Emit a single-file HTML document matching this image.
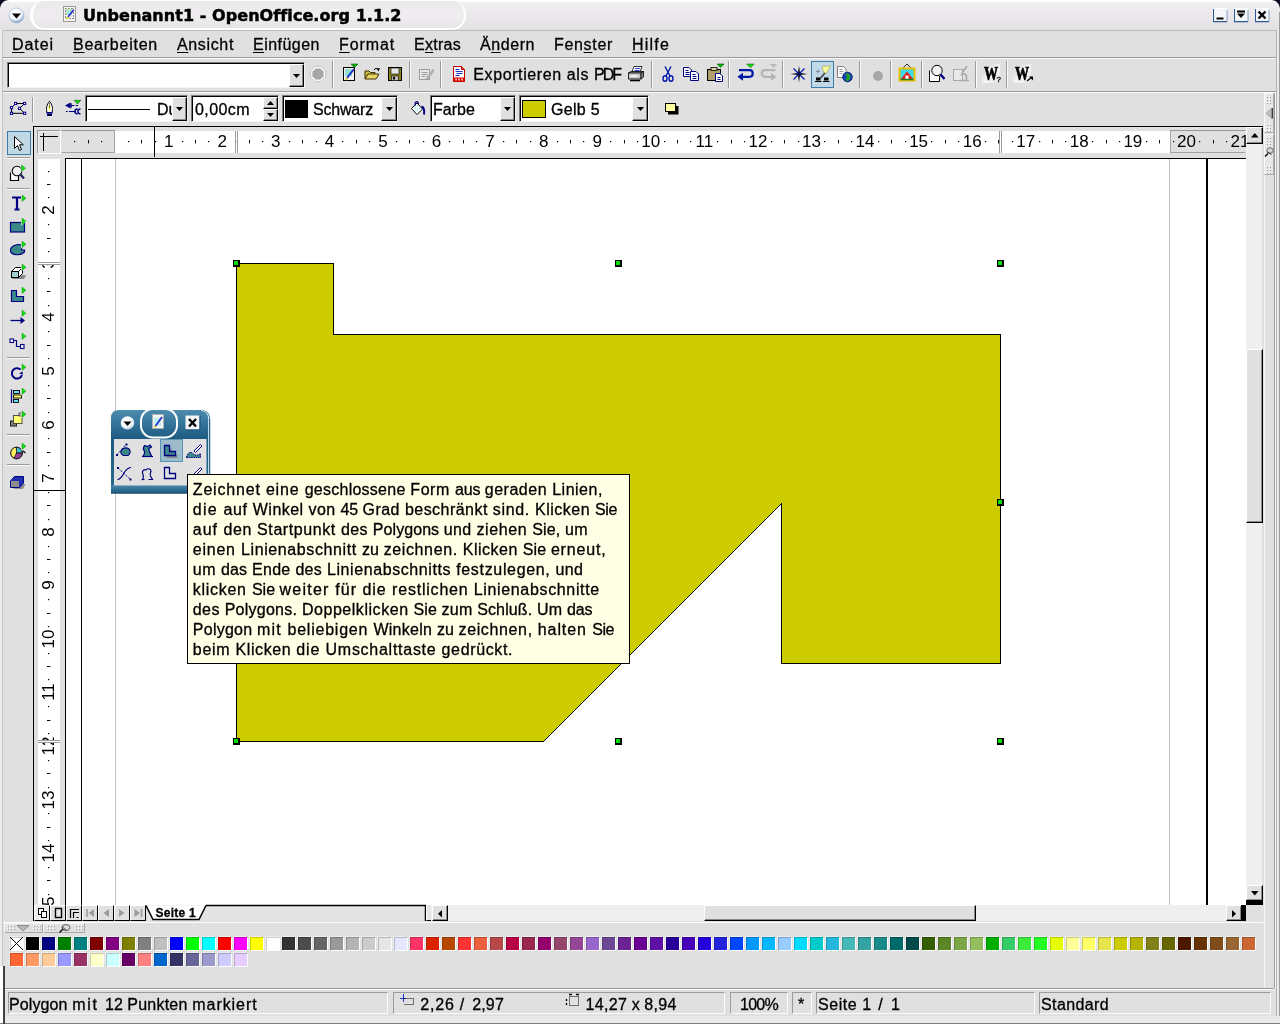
<!DOCTYPE html><html lang="de"><head><meta charset="utf-8"><title>Unbenannt1 - OpenOffice.org 1.1.2</title><style>
html,body{margin:0;padding:0}
body{width:1280px;height:1024px;overflow:hidden;background:#e0e0e0;position:relative;font-family:"Liberation Sans",sans-serif;color:#000}
div,span.t,svg{position:absolute}
span.t{white-space:pre;line-height:20px;-webkit-text-stroke:.3px #000}
span.rn{-webkit-text-stroke:0}
.ln{background:#000}
.sunk{box-sizing:border-box;background:#fff;border:1px solid;border-color:#7b7b7b #f4f4f4 #f4f4f4 #7b7b7b;box-shadow:inset 1px 1px 0 #000}
.btn{box-sizing:border-box;background:#e0e0e0;border:1px solid;border-color:#fff #000 #000 #fff;box-shadow:inset -1px -1px 0 #8a8a8a}
.sep{width:1px;background:#9a9a9a;box-shadow:1px 0 0 #fbfbfb}
.hsep{height:1px;background:#9a9a9a;box-shadow:0 1px 0 #fbfbfb}
u{text-decoration:underline;text-decoration-thickness:1px;text-underline-offset:2px;text-decoration-skip-ink:none}
</style></head><body><div id="w" style="left:0;top:0;width:1280px;height:1024px;will-change:transform">
<div style="left:0px;top:0px;width:1280px;height:30px;background:linear-gradient(#fff 0,#fff 2px,#f2eff2 2.5px,#e3e0e3 30px)"></div>
<svg style="left:0;top:0" width="12" height="12"><path d="M0 0H9C3.500 0.500 0.500 3.500 0 9Z" fill="#0c0a24"/></svg>
<svg style="left:1268px;top:0" width="12" height="12"><path d="M12 0H3C8.500 0.500 11.500 3.500 12 9Z" fill="#0c0a24"/></svg>
<div style="left:30px;top:1px;width:436px;height:29px;box-sizing:border-box;border-radius:14px;background:linear-gradient(#ebe8eb,#f0edf0 55%,#e8e5e8);border:solid #fff;border-width:0 2px 2.500px 3px"></div>
<svg style="left:7px;top:6px" width="19" height="19" viewBox="0 0 19 19"><defs><radialGradient id="g1" cx="0.45" cy="0.35" r="0.7"><stop offset="0" stop-color="#fff"/><stop offset="0.6" stop-color="#eef2f8"/><stop offset="1" stop-color="#3f74b4"/></radialGradient></defs><circle cx="9.5" cy="9.5" r="7.6" fill="url(#g1)" stroke="#b4c8e0" stroke-width="0.8"/><path d="M5 7.5H14L9.5 12.5Z" fill="#000"/></svg>
<svg style="left:63px;top:6px" width="14" height="16" viewBox="0 0 14 16"><rect x="0.5" y="0.5" width="12" height="15" fill="#f4f4f4" stroke="#9a9a9a"/><rect x="2.500" y="2.500" width="8" height="10" fill="none" stroke="#202020" stroke-width="1" stroke-dasharray="1 2"/><rect x="3" y="3" width="6" height="6" fill="#9fe8f0"/><path d="M3 3h1M6 3h1M4 5h1M7 5h1M3 7h1" stroke="#f4e040"/><path d="M10.5 4L5 11" stroke="#3a3ac8" stroke-width="2"/><path d="M5 11L3.8 12.6" stroke="#e8d820" stroke-width="2"/></svg>
<span class="t" style="left:83px;top:6.46px;font-size:16px;font-family:'DejaVu Sans', 'Liberation Sans', sans-serif;font-weight:bold;letter-spacing:0.065px;-webkit-text-stroke:.5px #000;">Unbenannt1 - OpenOffice.org 1.1.2</span>
<svg style="left:1213px;top:8px" width="15" height="15" viewBox="0 0 15 15"><rect x="0.5" y="0.5" width="13" height="13" fill="#f4f6fa" stroke="#fff"/><path d="M0.400 1V13.600H14" fill="none" stroke="#2d5a94" stroke-width="1.300"/><path d="M14 13.600V2" fill="none" stroke="#7f9cc4" stroke-width="1"/><path d="M3.5 10.5H10.5" stroke="#000" stroke-width="2"/></svg>
<svg style="left:1234px;top:8px" width="15" height="15" viewBox="0 0 15 15"><rect x="0.5" y="0.5" width="13" height="13" fill="#f4f6fa" stroke="#fff"/><path d="M0.400 1V13.600H14" fill="none" stroke="#2d5a94" stroke-width="1.300"/><path d="M14 13.600V2" fill="none" stroke="#7f9cc4" stroke-width="1"/><path d="M3 3.5H11" stroke="#000" stroke-width="2"/><path d="M3 5.5H11L7 10Z" fill="#000"/></svg>
<svg style="left:1255px;top:8px" width="15" height="15" viewBox="0 0 15 15"><rect x="0.5" y="0.5" width="13" height="13" fill="#f4f6fa" stroke="#fff"/><path d="M0.400 1V13.600H14" fill="none" stroke="#2d5a94" stroke-width="1.300"/><path d="M14 13.600V2" fill="none" stroke="#7f9cc4" stroke-width="1"/><path d="M3.5 3.5L10.5 10.5M10.5 3.5L3.5 10.5" stroke="#000" stroke-width="2.4"/></svg>
<div style="left:3px;top:30px;width:1273px;height:1px;background:#bcbabc"></div>
<span class="t" style="left:12px;top:35.46px;font-size:16px;letter-spacing:0.928px;"><u>D</u>atei</span>
<span class="t" style="left:73px;top:35.46px;font-size:16px;letter-spacing:0.761px;"><u>B</u>earbeiten</span>
<span class="t" style="left:177px;top:35.46px;font-size:16px;letter-spacing:0.647px;"><u>A</u>nsicht</span>
<span class="t" style="left:253px;top:35.46px;font-size:16px;letter-spacing:0.479px;"><u>E</u>infügen</span>
<span class="t" style="left:339px;top:35.46px;font-size:16px;letter-spacing:0.888px;"><u>F</u>ormat</span>
<span class="t" style="left:414px;top:35.46px;font-size:16px;letter-spacing:0.276px;">E<u>x</u>tras</span>
<span class="t" style="left:480px;top:35.46px;font-size:16px;letter-spacing:0.568px;">Ä<u>n</u>dern</span>
<span class="t" style="left:554px;top:35.46px;font-size:16px;letter-spacing:0.679px;">Fen<u>s</u>ter</span>
<span class="t" style="left:632px;top:35.46px;font-size:16px;letter-spacing:1.197px;"><u>H</u>ilfe</span>
<div class="hsep" style="left:3px;top:57px;width:1273px;height:1px;"></div>
<div class="hsep" style="left:3px;top:91px;width:1273px;height:1px;"></div>
<div style="left:0px;top:30px;width:2px;height:994px;background:#ecebec"></div>
<div style="left:2px;top:30px;width:1px;height:994px;background:#c4c4c4"></div>
<div class="sunk" style="left:7px;top:62px;width:298px;height:26px;"></div>
<div class="btn" style="left:289px;top:64px;width:15px;height:23px;"><svg style="left:3px;top:8.5px" width="7" height="4"><path d="M0 0H7L3.500 4Z" fill="#000"/></svg></div>
<svg style="left:308.5px;top:65px" width="18" height="18" viewBox="0 0 18 18"><path d="M16.67 12.18L12.18 16.67L5.82 16.67L1.33 12.18L1.33 5.82L5.82 1.33L12.18 1.33L16.67 5.82Z" fill="#f6f6f6" stroke="#c4c4c4" stroke-width="1"/><path d="M14.54 11.30L11.30 14.54L6.70 14.54L3.46 11.30L3.46 6.70L6.70 3.46L11.30 3.46L14.54 6.70Z" fill="#a6a6a6"/></svg>
<div class="sep" style="left:332px;top:61px;width:1px;height:27px;"></div>
<div class="sep" style="left:409px;top:61px;width:1px;height:27px;"></div>
<div class="sep" style="left:440px;top:61px;width:1px;height:27px;"></div>
<div class="sep" style="left:651px;top:61px;width:1px;height:27px;"></div>
<div class="sep" style="left:728px;top:61px;width:1px;height:27px;"></div>
<div class="sep" style="left:782px;top:61px;width:1px;height:27px;"></div>
<div class="sep" style="left:859px;top:61px;width:1px;height:27px;"></div>
<div class="sep" style="left:890px;top:61px;width:1px;height:27px;"></div>
<div class="sep" style="left:921px;top:61px;width:1px;height:27px;"></div>
<div class="sep" style="left:975px;top:61px;width:1px;height:27px;"></div>
<div class="sep" style="left:1006px;top:61px;width:1px;height:27px;"></div>
<svg style="left:341px;top:63px" width="18" height="20" viewBox="0 0 18 20"><rect x="2.5" y="4.5" width="11" height="13" fill="#f0f0f0" stroke="#000"/><rect x="4" y="6" width="7" height="7" fill="#7fe0e8"/><path d="M4 7h1M7 8h1M5 10h1M8 6h1" stroke="#f0e040"/><path d="M13 6L6 15" stroke="#2828c0" stroke-width="2"/><path d="M6 15L5 17" stroke="#e0d020" stroke-width="2"/><path d="M10 1H17L13.5 4.5Z" fill="#00b000" stroke="#006000" stroke-width="0.6"/></svg>
<svg style="left:363px;top:66px" width="18" height="16" viewBox="0 0 18 16"><path d="M2 13V5H6L7.5 6.5H12V8" fill="#c8b848" stroke="#403000"/><path d="M2 13L5 8H16L13 13Z" fill="#e8d868" stroke="#403000"/><path d="M11 4C12 2 14 2 15 3.5L16.5 2.5" fill="none" stroke="#000"/><path d="M15.5 5.5L16.8 2.2L13.6 2.6Z" fill="#000"/></svg>
<svg style="left:387px;top:66px" width="16" height="16" viewBox="0 0 16 16"><rect x="1.5" y="1.5" width="13" height="13" fill="#8a8420" stroke="#000"/><rect x="4" y="2" width="8" height="6" fill="#e8e8e8" stroke="#000" stroke-width="0.6"/><rect x="4.5" y="10" width="7" height="4.5" fill="#c0c0c0" stroke="#000" stroke-width="0.6"/><rect x="6" y="11" width="2" height="2.5" fill="#000"/></svg>
<svg style="left:417px;top:66px" width="18" height="16" viewBox="0 0 18 16"><rect x="2.5" y="3.5" width="10" height="10" fill="#e8e8e8" stroke="#9c9c9c"/><path d="M4.5 6.5h6M4.5 8.5h6M4.5 10.5h4" stroke="#9c9c9c"/><path d="M16 3L10 11L9 13.5L11.5 12.5L17 5Z" fill="#b4b4b4" stroke="#9c9c9c" stroke-width="0.6"/></svg>
<svg style="left:450.5px;top:65px" width="16" height="18" viewBox="0 0 16 18"><path d="M2.5 1.5H10.5L13.5 4.5V16.5H2.5Z" fill="#fff" stroke="#c00000"/><path d="M10.5 1.5V4.5H13.5" fill="#e04040" stroke="#c00000"/><path d="M4.5 4.5h4M4.5 6.5h7M5.5 8.5h6M4.5 10.5h4" stroke="#1830c8" stroke-width="1.2"/><rect x="2.5" y="12.5" width="11" height="4" fill="#e00000"/><path d="M5 13.5v2M8 13.5v2M11 13.5v2" stroke="#fff" stroke-width="1.3"/></svg>
<span class="t" style="left:473.3px;top:65.46px;font-size:16px;letter-spacing:0.603px;">Exportieren </span><span class="t" style="left:566.8px;top:65.46px;font-size:16px;letter-spacing:0.573px;">als </span><span class="t" style="left:594.0px;top:65.46px;font-size:16px;letter-spacing:-2.033px;">PDF</span>
<svg style="left:626px;top:65px" width="20" height="18" viewBox="0 0 20 18"><path d="M6 7L8 1.5H16L14 7Z" fill="#fff" stroke="#000" stroke-width="0.8"/><path d="M9 3.5h5M8.5 5.5h5" stroke="#3040d0"/><path d="M2.500 8L5 6.500H17.500L15 8Z" fill="#d0d0d0" stroke="#000" stroke-width="0.8"/><rect x="2.500" y="8" width="12.500" height="6" fill="#c8c8c8" stroke="#000" stroke-width="0.8"/><path d="M15 8L17.500 6.500V12L15 14Z" fill="#888" stroke="#000" stroke-width="0.8"/><path d="M4 15.500H14" stroke="#000" stroke-width="1.600"/><path d="M4.500 11h7" stroke="#fff" stroke-width="1.400"/></svg>
<svg style="left:660.5px;top:65px" width="14" height="18" viewBox="0 0 14 18"><path d="M4 1.5L9 11M10 1.5L5 11" stroke="#0018a8" stroke-width="1.4" fill="none"/><ellipse cx="4" cy="13.500" rx="2" ry="2.800" fill="none" stroke="#0018a8" stroke-width="1.400"/><ellipse cx="10" cy="13.500" rx="2" ry="2.800" fill="none" stroke="#0018a8" stroke-width="1.400"/></svg>
<svg style="left:682px;top:66px" width="18" height="16" viewBox="0 0 18 16"><path d="M1.5 1.5H7L9.500 4V10.500H1.500Z" fill="#fff" stroke="#000080"/><path d="M3.500 4.500h3M3.500 6.500h4M3.500 8.500h4" stroke="#000080"/><path d="M8.500 5.500H14L16.500 8V14.500H8.500Z" fill="#fff" stroke="#000080"/><path d="M10.500 8.500h3M10.500 10.500h4M10.500 12.500h4" stroke="#000080"/></svg>
<svg style="left:704.5px;top:63px" width="20" height="20" viewBox="0 0 20 20"><rect x="2.500" y="6.500" width="13" height="11" fill="#b0a070" stroke="#000"/><rect x="6" y="4.500" width="6" height="3" fill="#d8d8a0" stroke="#000" stroke-width="0.800"/><path d="M10.500 10.500H15L17.500 13V18.500H10.500Z" fill="#fff" stroke="#000080"/><path d="M12.500 14.500h3M12.500 16.500h3" stroke="#000080"/><path d="M12 1H19L15.500 4.500Z" fill="#00b000" stroke="#006000" stroke-width="0.600"/></svg>
<svg style="left:730px;top:60px" width="60" height="28" viewBox="730 60 60 28"><path d="M739 70.200H749.500C753.800 70.200 753.800 76.800 749.500 76.800H742" fill="none" stroke="#0018a8" stroke-width="2.200"/><path d="M743 72.800L737.300 76.800L743 80.800Z" fill="#0018a8"/><path d="M746.700 64H754.200L750.450 67.800Z" fill="#10d810" stroke="#085808" stroke-width="0.500"/><path d="M775.500 70.200H765C760.700 70.200 760.700 76.800 765 76.800H772" fill="none" stroke="#b4b4b4" stroke-width="2.200"/><path d="M771 72.800L776.700 76.800L771 80.800Z" fill="#b4b4b4"/><path d="M769.700 64H777.200L773.450 67.800Z" fill="#b8b8b8"/></svg>
<svg style="left:789.5px;top:65px" width="18" height="18" viewBox="0 0 18 18"><path d="M9 0.500L10 8L17.500 9L10 10L9 17.500L8 10L0.500 9L8 8Z" fill="#000"/><path d="M3.500 3.500L8.500 8.500M14.500 3.500L9.500 8.500M3.500 14.500L8.500 9.500M14.500 14.500L9.500 9.500" stroke="#0018a8" stroke-width="1.200"/></svg>
<div style="left:811px;top:61px;width:23px;height:27px;box-sizing:border-box;background:#c0d8e8;border:1px solid #3c7ca8"></div>
<svg style="left:813.5px;top:65px" width="18" height="18" viewBox="0 0 18 18"><path d="M8 1.500L16.500 1L12.500 8L10 8.500Z" fill="#f8f8a0" stroke="#a0a040" stroke-width="0.600"/><path d="M11 8L6.500 13" stroke="#404040" stroke-width="1.600"/><path d="M2 6.500h4M4 4.500v4" stroke="#8090a0" stroke-width="1.200"/><rect x="2" y="12.500" width="4.500" height="3" fill="#000"/><rect x="10" y="12.500" width="4.500" height="3" fill="#000"/><path d="M1 16.500h6.500M9 16.500h6.500" stroke="#000"/></svg>
<svg style="left:836px;top:65px" width="18" height="18" viewBox="0 0 18 18"><path d="M1.500 1.500H7.500L10 4V12.500H1.500Z" fill="#fff" stroke="#808080"/><path d="M3.500 4.500h3M3.500 6.500h4M3.500 8.500h3" stroke="#a0a0a0"/><circle cx="11.500" cy="12" r="4.800" fill="#1840c0" stroke="#001060" stroke-width="0.800"/><path d="M9 9.500C11 10 11.500 12 10 13.500C9 14.500 10.500 16 12 16C14 14.500 15 12 14 10C12.500 8.500 10 8 9 9.500Z" fill="#20a020"/></svg>
<svg style="left:871.5px;top:69.5px" width="12" height="12" viewBox="0 0 12 12"><circle cx="6" cy="6" r="5" fill="#a8a8a8"/></svg>
<svg style="left:898px;top:63px" width="18" height="20" viewBox="0 0 18 20"><path d="M5 5L9 1L13 5" fill="none" stroke="#000" stroke-width="0.800"/><rect x="1.500" y="5.500" width="15" height="12" fill="#40d8e8" stroke="#e8c000" stroke-width="2"/><path d="M2.500 16.500L9 8.500L15.500 16.500Z" fill="#e02020"/><rect x="7.500" y="12.500" width="3" height="4" fill="#fff"/><path d="M2.500 16.500h13" stroke="#208020" stroke-width="1.500"/></svg>
<svg style="left:927px;top:64px" width="20" height="20" viewBox="0 0 20 20"><path d="M2.500 6.500V17.500H12.500V12" fill="#fff" stroke="#000"/><circle cx="10" cy="6.500" r="5.200" fill="#f4f4f4" stroke="#000"/><path d="M13.500 10.500L17.500 15" stroke="#000080" stroke-width="2.400"/></svg>
<svg style="left:951px;top:64px" width="20" height="20" viewBox="0 0 20 20"><rect x="2.500" y="5.500" width="9" height="11" fill="#e8e8e8" stroke="#a8a8a8"/><path d="M16 2L11 9M10 11.500C10 9 15.500 9 15.500 12.500V15.500M8 16.500h10" fill="none" stroke="#a8a8a8" stroke-width="1.600"/></svg>
<div style="left:982px;top:64px;width:18px;height:19px;background:linear-gradient(135deg,#e0e0e0 25%,#f6f6f6 60%,#e6e6e6 90%)"></div>
<div style="left:1013px;top:64px;width:18px;height:19px;background:linear-gradient(135deg,#e0e0e0 25%,#f6f6f6 60%,#e6e6e6 90%)"></div>
<span class="t" style="left:983.5px;top:63.92px;font-size:18px;font-family:'Liberation Serif', serif;font-weight:bold;transform:scaleX(.78);transform-origin:0 0;-webkit-text-stroke:.7px #000;">W</span>
<span class="t" style="left:996.5px;top:70.23px;font-size:8px;line-height:20px;">?</span>
<span class="t" style="left:1015px;top:63.92px;font-size:18px;font-family:'Liberation Serif', serif;font-weight:bold;transform:scaleX(.78);transform-origin:0 0;-webkit-text-stroke:.7px #000;">W</span>
<svg style="left:1026px;top:75px" width="8" height="8" viewBox="0 0 8 8"><path d="M1 6L6 2" stroke="#000" stroke-width="1.200"/><path d="M3 1.500H7V5.500Z" fill="#000"/></svg>
<svg style="left:0;top:93px" width="90" height="32" viewBox="0 93 90 32"><path d="M15.600 103.500H24.600L19.500 108.400L24.600 113.300H11.500V107.600Z" fill="none" stroke="#000" stroke-width="1"/><rect x="14.5" y="102.4" width="2.200" height="2.200" fill="#fff" stroke="#000090" stroke-width="1"/><rect x="23.5" y="102.4" width="2.200" height="2.200" fill="#fff" stroke="#000090" stroke-width="1"/><rect x="10.4" y="106.5" width="2.200" height="2.200" fill="#fff" stroke="#000090" stroke-width="1"/><rect x="18.4" y="107.3" width="2.200" height="2.200" fill="#fff" stroke="#000090" stroke-width="1"/><rect x="10.4" y="112.2" width="2.200" height="2.200" fill="#fff" stroke="#000090" stroke-width="1"/><rect x="23.5" y="112.2" width="2.200" height="2.200" fill="#fff" stroke="#000090" stroke-width="1"/><path d="M49.500 101.200C46.500 105 46 108.500 47 112.500H52C53 108.500 52.500 105 49.500 101.200Z" fill="#fff" stroke="#000" stroke-width="1"/><path d="M49.500 103.500C48.300 106 48.300 109 49.500 111.500C50.700 109 50.700 106 49.500 103.500Z" fill="#f8e820"/><path d="M49.500 103V108" stroke="#404040" stroke-width="0.700"/><rect x="46.300" y="112.300" width="6.400" height="1.200" fill="#000090"/><rect x="47" y="113.500" width="5" height="2.500" fill="#000090"/><rect x="48.500" y="114" width="2" height="2" fill="#000"/><path d="M74 100.300H81L77.500 104Z" fill="#10d810" stroke="#084808" stroke-width="0.500"/><path d="M70 105.500H78" stroke="#000080" stroke-width="1.200" stroke-dasharray="4.500 1.200"/><path d="M70.500 102.500L65 105.500L70.500 108.500Z" fill="#000080"/><path d="M71 103.300V107.700" stroke="#000080" stroke-width="1.400"/><path d="M66 111.500H76" stroke="#000080" stroke-width="1.200" stroke-dasharray="1.800 1.200 8 0"/><path d="M77.500 109C74 109.500 74 113.500 77.500 114M80.500 109C77 109.500 77 113.500 80.500 114" fill="none" stroke="#000080" stroke-width="1.400"/></svg>
<div class="sep" style="left:32px;top:97px;width:1px;height:25px;"></div>
<div class="sunk" style="left:85px;top:95px;width:103px;height:27px;"></div>
<div class="ln" style="left:88px;top:109px;width:62px;height:1px;"></div>
<div style="left:155px;top:98px;width:18px;height:22px;overflow:hidden"><span class="t" style="left:2px;top:2.46px;font-size:16px;">Du</span></div>
<div class="btn" style="left:172px;top:97px;width:15px;height:24px;"><svg style="left:3px;top:9px" width="7" height="4"><path d="M0 0H7L3.500 4Z" fill="#000"/></svg></div>
<div class="sunk" style="left:191px;top:95px;width:88px;height:27px;"></div>
<span class="t" style="left:195px;top:100.46px;font-size:16px;letter-spacing:0.422px;">0,00cm</span>
<div class="btn" style="left:263px;top:97px;width:15px;height:12px;"><svg style="left:3px;top:3px" width="7" height="4"><path d="M0 4H7L3.5 0Z" fill="#000"/></svg></div>
<div class="btn" style="left:263px;top:109px;width:15px;height:12px;"><svg style="left:3px;top:3px" width="7" height="4"><path d="M0 0H7L3.5 4Z" fill="#000"/></svg></div>
<div class="sunk" style="left:282px;top:95px;width:116px;height:27px;"></div>
<div style="left:285px;top:100px;width:23px;height:18px;background:#000"></div>
<span class="t" style="left:313px;top:100.46px;font-size:16px;letter-spacing:-0.194px;">Schwarz</span>
<div class="btn" style="left:381px;top:97px;width:16px;height:24px;"><svg style="left:3.5px;top:9px" width="7" height="4"><path d="M0 0H7L3.500 4Z" fill="#000"/></svg></div>
<svg style="left:407px;top:99px" width="20" height="18" viewBox="0 0 20 18"><path d="M4.500 9.500L10 4L15.500 10L10 15.500Z" fill="#fff" stroke="#000" stroke-width="1"/><path d="M8 9h1M10 11h1M10 7h1M12 9.500h1M8.500 12h1" stroke="#30d8e8" stroke-width="1"/><path d="M8.500 6.500C7 2.500 11 1 11.500 5" fill="none" stroke="#000080" stroke-width="1.300"/><path d="M14.500 7.500C17.500 8.500 17.500 12 17 15.500" fill="none" stroke="#000080" stroke-width="2"/></svg>
<div class="sunk" style="left:430px;top:95px;width:86px;height:27px;"></div>
<span class="t" style="left:433px;top:100.46px;font-size:16px;letter-spacing:0.041px;">Farbe</span>
<div class="btn" style="left:500px;top:97px;width:15px;height:24px;"><svg style="left:3px;top:9px" width="7" height="4"><path d="M0 0H7L3.500 4Z" fill="#000"/></svg></div>
<div class="sunk" style="left:519px;top:95px;width:130px;height:27px;"></div>
<div style="left:522px;top:100px;width:24px;height:18px;box-sizing:border-box;background:#cccc00;border:1px solid #000"></div>
<span class="t" style="left:551px;top:100.46px;font-size:16px;letter-spacing:0.310px;">Gelb 5</span>
<div class="btn" style="left:632px;top:97px;width:16px;height:24px;"><svg style="left:3.5px;top:9px" width="7" height="4"><path d="M0 0H7L3.500 4Z" fill="#000"/></svg></div>
<svg style="left:665px;top:103px" width="14" height="12" viewBox="0 0 14 12"><rect x="3" y="3" width="10.500" height="8.500" fill="#000"/><rect x="0.500" y="0.500" width="10" height="8" fill="#ffffa0" stroke="#000"/></svg>
<div class="ln" style="left:33px;top:126px;width:1230px;height:1px;"></div>
<div class="ln" style="left:33px;top:126px;width:1px;height:795px;"></div>
<div style="left:65px;top:158px;width:1181px;height:747px;background:#fff"></div>
<div class="ln" style="left:64.7px;top:158px;width:1181.3px;height:1.3px;"></div>
<div class="ln" style="left:64.7px;top:158px;width:1.4px;height:747px;"></div>
<div class="ln" style="left:81px;top:159px;width:1px;height:746px;"></div>
<div style="left:115px;top:159px;width:1px;height:746px;background:#c0c0c0"></div>
<div style="left:1169px;top:159px;width:1px;height:746px;background:#c0c0c0"></div>
<div class="ln" style="left:1205.6px;top:159px;width:2.3px;height:746px;"></div>
<div style="left:115px;top:131px;width:1055px;height:22px;background:#fff"></div>
<div style="left:61px;top:130px;width:54px;height:23px;box-sizing:border-box;background:#e0e0e0;border:1px solid;border-color:#989898 #a4a4a4 #a4a4a4 #e0e0e0"></div>
<div style="left:1170px;top:130px;width:76px;height:23px;box-sizing:border-box;background:#e0e0e0;border:1px solid;border-color:#989898 #e0e0e0 #a4a4a4 #a4a4a4"></div>
<div style="left:37px;top:130px;width:24px;height:24px;box-sizing:border-box;background:#e0e0e0;border:1px solid;border-color:#989898 #fff #fff #989898;box-shadow:inset 1px 1px 0 #f0f0f0"><div class="ln" style="left:5px;top:2px;width:1px;height:18px"></div><div class="ln" style="left:2px;top:5px;width:18px;height:1px"></div></div>
<span class="t rn" style="left:148.72px;top:131.6px;width:40px;text-align:center;font-size:17px">1</span>
<span class="t rn" style="left:202.28px;top:131.6px;width:40px;text-align:center;font-size:17px">2</span>
<span class="t rn" style="left:255.85px;top:131.6px;width:40px;text-align:center;font-size:17px">3</span>
<span class="t rn" style="left:309.41px;top:131.6px;width:40px;text-align:center;font-size:17px">4</span>
<span class="t rn" style="left:362.97px;top:131.6px;width:40px;text-align:center;font-size:17px">5</span>
<span class="t rn" style="left:416.53px;top:131.6px;width:40px;text-align:center;font-size:17px">6</span>
<span class="t rn" style="left:470.10px;top:131.6px;width:40px;text-align:center;font-size:17px">7</span>
<span class="t rn" style="left:523.66px;top:131.6px;width:40px;text-align:center;font-size:17px">8</span>
<span class="t rn" style="left:577.22px;top:131.6px;width:40px;text-align:center;font-size:17px">9</span>
<span class="t rn" style="left:630.78px;top:131.6px;width:40px;text-align:center;font-size:17px">10</span>
<span class="t rn" style="left:684.35px;top:131.6px;width:40px;text-align:center;font-size:17px">11</span>
<span class="t rn" style="left:737.91px;top:131.6px;width:40px;text-align:center;font-size:17px">12</span>
<span class="t rn" style="left:791.47px;top:131.6px;width:40px;text-align:center;font-size:17px">13</span>
<span class="t rn" style="left:845.03px;top:131.6px;width:40px;text-align:center;font-size:17px">14</span>
<span class="t rn" style="left:898.60px;top:131.6px;width:40px;text-align:center;font-size:17px">15</span>
<span class="t rn" style="left:952.16px;top:131.6px;width:40px;text-align:center;font-size:17px">16</span>
<span class="t rn" style="left:1005.72px;top:131.6px;width:40px;text-align:center;font-size:17px">17</span>
<span class="t rn" style="left:1059.29px;top:131.6px;width:40px;text-align:center;font-size:17px">18</span>
<span class="t rn" style="left:1112.85px;top:131.6px;width:40px;text-align:center;font-size:17px">19</span>
<span class="t rn" style="left:1166.41px;top:131.6px;width:40px;text-align:center;font-size:17px">20</span>
<svg style="left:0;top:131px" width="1246" height="22"><rect x="74" y="10" width="1.200" height="1.200"/><rect x="88" y="9" width="1" height="3.400"/><rect x="101" y="10" width="1.200" height="1.200"/><rect x="128" y="10" width="1.200" height="1.200"/><rect x="141" y="9" width="1" height="3.400"/><rect x="155" y="10" width="1.200" height="1.200"/><rect x="182" y="10" width="1.200" height="1.200"/><rect x="195" y="9" width="1" height="3.400"/><rect x="208" y="10" width="1.200" height="1.200"/><rect x="235" y="10" width="1.200" height="1.200"/><rect x="249" y="9" width="1" height="3.400"/><rect x="262" y="10" width="1.200" height="1.200"/><rect x="289" y="10" width="1.200" height="1.200"/><rect x="302" y="9" width="1" height="3.400"/><rect x="316" y="10" width="1.200" height="1.200"/><rect x="342" y="10" width="1.200" height="1.200"/><rect x="356" y="9" width="1" height="3.400"/><rect x="369" y="10" width="1.200" height="1.200"/><rect x="396" y="10" width="1.200" height="1.200"/><rect x="409" y="9" width="1" height="3.400"/><rect x="423" y="10" width="1.200" height="1.200"/><rect x="449" y="10" width="1.200" height="1.200"/><rect x="463" y="9" width="1" height="3.400"/><rect x="476" y="10" width="1.200" height="1.200"/><rect x="503" y="10" width="1.200" height="1.200"/><rect x="516" y="9" width="1" height="3.400"/><rect x="530" y="10" width="1.200" height="1.200"/><rect x="557" y="10" width="1.200" height="1.200"/><rect x="570" y="9" width="1" height="3.400"/><rect x="583" y="10" width="1.200" height="1.200"/><rect x="610" y="10" width="1.200" height="1.200"/><rect x="624" y="9" width="1" height="3.400"/><rect x="637" y="10" width="1.200" height="1.200"/><rect x="664" y="10" width="1.200" height="1.200"/><rect x="677" y="9" width="1" height="3.400"/><rect x="690" y="10" width="1.200" height="1.200"/><rect x="717" y="10" width="1.200" height="1.200"/><rect x="731" y="9" width="1" height="3.400"/><rect x="744" y="10" width="1.200" height="1.200"/><rect x="771" y="10" width="1.200" height="1.200"/><rect x="784" y="9" width="1" height="3.400"/><rect x="798" y="10" width="1.200" height="1.200"/><rect x="824" y="10" width="1.200" height="1.200"/><rect x="838" y="9" width="1" height="3.400"/><rect x="851" y="10" width="1.200" height="1.200"/><rect x="878" y="10" width="1.200" height="1.200"/><rect x="891" y="9" width="1" height="3.400"/><rect x="905" y="10" width="1.200" height="1.200"/><rect x="931" y="10" width="1.200" height="1.200"/><rect x="945" y="9" width="1" height="3.400"/><rect x="958" y="10" width="1.200" height="1.200"/><rect x="985" y="10" width="1.200" height="1.200"/><rect x="998" y="9" width="1" height="3.400"/><rect x="1012" y="10" width="1.200" height="1.200"/><rect x="1039" y="10" width="1.200" height="1.200"/><rect x="1052" y="9" width="1" height="3.400"/><rect x="1065" y="10" width="1.200" height="1.200"/><rect x="1092" y="10" width="1.200" height="1.200"/><rect x="1106" y="9" width="1" height="3.400"/><rect x="1119" y="10" width="1.200" height="1.200"/><rect x="1146" y="10" width="1.200" height="1.200"/><rect x="1159" y="9" width="1" height="3.400"/><rect x="1173" y="10" width="1.200" height="1.200"/><rect x="1199" y="10" width="1.200" height="1.200"/><rect x="1213" y="9" width="1" height="3.400"/><rect x="1226" y="10" width="1.200" height="1.200"/></svg>
<div style="left:1226px;top:131px;width:20px;height:22px;overflow:hidden"><span class="t rn" style="left:-6.03px;top:0.6px;width:40px;text-align:center;font-size:17px">21</span></div>
<div class="ln" style="left:154px;top:126px;width:1.3px;height:31px;"></div>
<div style="left:235px;top:131px;width:1px;height:22px;background:#9c9c9c"></div>
<div style="left:237px;top:131px;width:1px;height:22px;background:#9c9c9c"></div>
<div style="left:999px;top:131px;width:1px;height:22px;background:#9c9c9c"></div>
<div style="left:1001px;top:131px;width:1px;height:22px;background:#9c9c9c"></div>
<div style="left:38px;top:159px;width:22px;height:746px;background:#fff"></div>
<span class="t rn" style="left:29px;top:200.32px;width:40px;text-align:center;font-size:17px;transform:rotate(-90deg)">2</span>
<span class="t rn" style="left:29px;top:307.45px;width:40px;text-align:center;font-size:17px;transform:rotate(-90deg)">4</span>
<span class="t rn" style="left:29px;top:361.01px;width:40px;text-align:center;font-size:17px;transform:rotate(-90deg)">5</span>
<span class="t rn" style="left:29px;top:414.57px;width:40px;text-align:center;font-size:17px;transform:rotate(-90deg)">6</span>
<span class="t rn" style="left:29px;top:468.14px;width:40px;text-align:center;font-size:17px;transform:rotate(-90deg)">7</span>
<span class="t rn" style="left:29px;top:521.70px;width:40px;text-align:center;font-size:17px;transform:rotate(-90deg)">8</span>
<span class="t rn" style="left:29px;top:575.26px;width:40px;text-align:center;font-size:17px;transform:rotate(-90deg)">9</span>
<span class="t rn" style="left:29px;top:628.83px;width:40px;text-align:center;font-size:17px;transform:rotate(-90deg)">10</span>
<span class="t rn" style="left:29px;top:682.39px;width:40px;text-align:center;font-size:17px;transform:rotate(-90deg)">11</span>
<span class="t rn" style="left:29px;top:789.51px;width:40px;text-align:center;font-size:17px;transform:rotate(-90deg)">13</span>
<span class="t rn" style="left:29px;top:843.08px;width:40px;text-align:center;font-size:17px;transform:rotate(-90deg)">14</span>
<svg style="left:38px;top:0" width="22" height="905"><rect x="10" y="171" width="1.200" height="1.200"/><rect x="9" y="184" width="3.400" height="1"/><rect x="10" y="197" width="1.200" height="1.200"/><rect x="10" y="224" width="1.200" height="1.200"/><rect x="9" y="238" width="3.400" height="1"/><rect x="10" y="251" width="1.200" height="1.200"/><rect x="10" y="278" width="1.200" height="1.200"/><rect x="9" y="291" width="3.400" height="1"/><rect x="10" y="305" width="1.200" height="1.200"/><rect x="10" y="331" width="1.200" height="1.200"/><rect x="9" y="345" width="3.400" height="1"/><rect x="10" y="358" width="1.200" height="1.200"/><rect x="10" y="385" width="1.200" height="1.200"/><rect x="9" y="398" width="3.400" height="1"/><rect x="10" y="412" width="1.200" height="1.200"/><rect x="10" y="438" width="1.200" height="1.200"/><rect x="9" y="452" width="3.400" height="1"/><rect x="10" y="465" width="1.200" height="1.200"/><rect x="10" y="492" width="1.200" height="1.200"/><rect x="9" y="505" width="3.400" height="1"/><rect x="10" y="519" width="1.200" height="1.200"/><rect x="10" y="546" width="1.200" height="1.200"/><rect x="9" y="559" width="3.400" height="1"/><rect x="10" y="572" width="1.200" height="1.200"/><rect x="10" y="599" width="1.200" height="1.200"/><rect x="9" y="613" width="3.400" height="1"/><rect x="10" y="626" width="1.200" height="1.200"/><rect x="10" y="653" width="1.200" height="1.200"/><rect x="9" y="666" width="3.400" height="1"/><rect x="10" y="679" width="1.200" height="1.200"/><rect x="10" y="706" width="1.200" height="1.200"/><rect x="9" y="720" width="3.400" height="1"/><rect x="10" y="733" width="1.200" height="1.200"/><rect x="10" y="760" width="1.200" height="1.200"/><rect x="9" y="773" width="3.400" height="1"/><rect x="10" y="787" width="1.200" height="1.200"/><rect x="10" y="813" width="1.200" height="1.200"/><rect x="9" y="827" width="3.400" height="1"/><rect x="10" y="840" width="1.200" height="1.200"/><rect x="10" y="867" width="1.200" height="1.200"/><rect x="9" y="880" width="3.400" height="1"/><rect x="10" y="894" width="1.200" height="1.200"/></svg>
<div style="left:38px;top:262px;width:22px;height:1px;background:#9c9c9c"></div>
<div style="left:38px;top:264px;width:22px;height:1px;background:#9c9c9c"></div>
<div style="left:38px;top:740px;width:22px;height:1px;background:#9c9c9c"></div>
<div style="left:38px;top:742px;width:22px;height:1px;background:#9c9c9c"></div>
<div class="ln" style="left:34px;top:490px;width:31px;height:1px;"></div>
<div style="left:38px;top:265px;width:22px;height:3px;overflow:hidden"><span class="t rn" style="left:-9px;top:-11px;width:40px;text-align:center;font-size:17px;transform:rotate(-90deg)">3</span></div>
<span class="t rn" style="left:29px;top:735.95px;width:40px;text-align:center;font-size:17px;transform:rotate(-90deg)">12</span>
<div style="left:38px;top:740px;width:22px;height:3px;background:#fff;border-top:1px solid #9c9c9c;border-bottom:1px solid #9c9c9c;box-sizing:border-box"></div>
<svg style="left:0;top:0" width="1280" height="1024"><path d="M236.500 263.500H333.500V334.500H1000.500V663.500H781.500V503.500L543.500 741.500H236.500Z" fill="#cccc00" stroke="#000" stroke-width="1" shape-rendering="crispEdges"/><rect x="233.5" y="260.5" width="6" height="6" fill="#00dc00" stroke="#000" stroke-width="1"/><path d="M238.5 261.0V265.5H234.0" fill="none" stroke="#000" stroke-width="1"/><rect x="615.5" y="260.5" width="6" height="6" fill="#00dc00" stroke="#000" stroke-width="1"/><path d="M620.5 261.0V265.5H616.0" fill="none" stroke="#000" stroke-width="1"/><rect x="997.5" y="260.5" width="6" height="6" fill="#00dc00" stroke="#000" stroke-width="1"/><path d="M1002.5 261.0V265.5H998.0" fill="none" stroke="#000" stroke-width="1"/><rect x="997.5" y="499.5" width="6" height="6" fill="#00dc00" stroke="#000" stroke-width="1"/><path d="M1002.5 500.0V504.5H998.0" fill="none" stroke="#000" stroke-width="1"/><rect x="997.5" y="738.5" width="6" height="6" fill="#00dc00" stroke="#000" stroke-width="1"/><path d="M1002.5 739.0V743.5H998.0" fill="none" stroke="#000" stroke-width="1"/><rect x="615.5" y="738.5" width="6" height="6" fill="#00dc00" stroke="#000" stroke-width="1"/><path d="M620.5 739.0V743.5H616.0" fill="none" stroke="#000" stroke-width="1"/><rect x="233.5" y="738.5" width="6" height="6" fill="#00dc00" stroke="#000" stroke-width="1"/><path d="M238.5 739.0V743.5H234.0" fill="none" stroke="#000" stroke-width="1"/><rect x="233.5" y="499.5" width="6" height="6" fill="#00dc00" stroke="#000" stroke-width="1"/><path d="M238.5 500.0V504.5H234.0" fill="none" stroke="#000" stroke-width="1"/></svg>
<div style="left:1246px;top:127px;width:16px;height:778px;background:#efefef"></div>
<div class="btn" style="left:1246px;top:127px;width:17px;height:17px;"><svg style="left:3.500px;top:4.500px" width="8" height="5"><path d="M0 4.400H7.600L3.800 0Z" fill="#000"/></svg></div>
<div class="btn" style="left:1246px;top:885px;width:17px;height:16px;"><svg style="left:3.500px;top:5px" width="8" height="5"><path d="M0 0H7.600L3.800 4.400Z" fill="#000"/></svg></div>
<div class="ln" style="left:1246px;top:900px;width:17px;height:5px;"></div>
<div style="left:1246px;top:349px;width:17px;height:174px;box-sizing:border-box;background:#e0e0e0;border:1px solid;border-color:#fff #000 #000 #fff;box-shadow:inset -1px -1px 0 #8a8a8a"></div>
<div style="left:38px;top:890px;width:22px;height:15px;overflow:hidden"><span class="t rn" style="left:-9px;top:6px;width:40px;text-align:center;font-size:17px;transform:rotate(-90deg)">15</span></div>
<div style="left:34px;top:905px;width:112px;height:16px;background:#000"></div>
<div style="left:34px;top:905px;width:16px;height:16px;box-sizing:border-box;background:#ececec;border:1px solid;border-color:#fff #000 #000 #fff"><svg style="left:0;top:0" width="14" height="14"><rect x="3.500" y="2.500" width="5" height="6" fill="#fff" stroke="#000"/><rect x="6.500" y="5.500" width="5" height="6" fill="#fff" stroke="#000"/></svg></div>
<div style="left:50px;top:905px;width:16px;height:16px;box-sizing:border-box;background:#e0e0e0;border:1px solid;border-color:#fff #000 #000 #fff"><svg style="left:0;top:0" width="14" height="14"><rect x="4.500" y="2.500" width="6" height="9" fill="#e8e8e8" stroke="#000" stroke-width="1.400"/></svg></div>
<div style="left:66px;top:905px;width:16px;height:16px;box-sizing:border-box;background:#e0e0e0;border:1px solid;border-color:#fff #000 #000 #fff"><svg style="left:0;top:0" width="14" height="14"><path d="M3.500 12V3.500H12M6.500 12V6.500H12M9.500 11.500h2" fill="none" stroke="#000" stroke-width="1.200"/></svg></div>
<div style="left:82px;top:905px;width:16px;height:16px;box-sizing:border-box;background:#e0e0e0;border:1px solid;border-color:#fff #000 #000 #fff"><svg style="left:0;top:0" width="14" height="14"><path d="M4 3v8" stroke="#9c9c9c" stroke-width="1.600"/><path d="M11 3L5.500 7L11 11Z" fill="#9c9c9c"/></svg></div>
<div style="left:98px;top:905px;width:16px;height:16px;box-sizing:border-box;background:#e0e0e0;border:1px solid;border-color:#fff #000 #000 #fff"><svg style="left:0;top:0" width="14" height="14"><path d="M10 3L4.500 7L10 11Z" fill="#9c9c9c"/></svg></div>
<div style="left:114px;top:905px;width:16px;height:16px;box-sizing:border-box;background:#e0e0e0;border:1px solid;border-color:#fff #000 #000 #fff"><svg style="left:0;top:0" width="14" height="14"><path d="M4 3L9.500 7L4 11Z" fill="#9c9c9c"/></svg></div>
<div style="left:130px;top:905px;width:16px;height:16px;box-sizing:border-box;background:#e0e0e0;border:1px solid;border-color:#fff #000 #000 #fff"><svg style="left:0;top:0" width="14" height="14"><path d="M10.500 3v8" stroke="#9c9c9c" stroke-width="1.600"/><path d="M3.500 3L9 7L3.500 11Z" fill="#9c9c9c"/></svg></div>
<div style="left:146px;top:905px;width:280px;height:16px;background:#e4e4e4"></div>
<svg style="left:140px;top:904px" width="290" height="18"><path d="M6 1.500L13 15.500H59L66 1.500" fill="#fff" stroke="#000" stroke-width="1.500"/><path d="M66 1.500H285.500V17" fill="none" stroke="#000" stroke-width="1.500"/></svg>
<span class="t" style="left:155.5px;top:902.84px;font-size:12px;font-weight:bold;letter-spacing:0.257px;">Seite 1</span>
<div style="left:426px;top:905px;width:6px;height:16px;box-sizing:border-box;background:#e4e4e4;border:1px solid;border-color:#e4e4e4 #000 #000 #fff"></div>
<div style="left:431px;top:905px;width:815px;height:16px;background:#efefef"></div>
<div class="btn" style="left:432px;top:905px;width:16px;height:16px;"><svg style="left:4.500px;top:3.500px" width="4" height="8"><path d="M4 0V7.500L0 3.750Z" fill="#000"/></svg></div>
<div class="btn" style="left:1226px;top:905px;width:16px;height:16px;"><svg style="left:5px;top:3.500px" width="4" height="8"><path d="M0 0V7.500L4 3.750Z" fill="#000"/></svg></div>
<div class="ln" style="left:1241px;top:905px;width:5px;height:16px;"></div>
<div style="left:704px;top:905px;width:272px;height:16px;box-sizing:border-box;background:#e0e0e0;border:1px solid;border-color:#fff #000 #000 #fff;box-shadow:inset -1px -1px 0 #8a8a8a"></div>
<div style="left:1246px;top:905px;width:17px;height:16px;background:#e0e0e0"></div>
<div style="left:3px;top:921.5px;width:1260px;height:1px;background:#fbfbfb"></div>
<div style="left:4px;top:923px;width:39px;height:10px;box-sizing:border-box;border:1px solid;border-color:#f6f6f6 #a8a8a8 #a8a8a8 #f6f6f6"></div>
<div style="left:43px;top:923px;width:42px;height:10px;box-sizing:border-box;border:1px solid;border-color:#f6f6f6 #a8a8a8 #a8a8a8 #f6f6f6"></div>
<svg style="left:0;top:923px" width="90" height="10"><rect x="7" y="2" width="1" height="1" fill="#fff"/><rect x="8" y="3" width="1" height="1" fill="#9a9a9a"/><rect x="7" y="5" width="1" height="1" fill="#fff"/><rect x="8" y="6" width="1" height="1" fill="#9a9a9a"/><rect x="10" y="2" width="1" height="1" fill="#fff"/><rect x="11" y="3" width="1" height="1" fill="#9a9a9a"/><rect x="10" y="5" width="1" height="1" fill="#fff"/><rect x="11" y="6" width="1" height="1" fill="#9a9a9a"/><rect x="13" y="2" width="1" height="1" fill="#fff"/><rect x="14" y="3" width="1" height="1" fill="#9a9a9a"/><rect x="13" y="5" width="1" height="1" fill="#fff"/><rect x="14" y="6" width="1" height="1" fill="#9a9a9a"/><rect x="33" y="2" width="1" height="1" fill="#fff"/><rect x="34" y="3" width="1" height="1" fill="#9a9a9a"/><rect x="33" y="5" width="1" height="1" fill="#fff"/><rect x="34" y="6" width="1" height="1" fill="#9a9a9a"/><rect x="36" y="2" width="1" height="1" fill="#fff"/><rect x="37" y="3" width="1" height="1" fill="#9a9a9a"/><rect x="36" y="5" width="1" height="1" fill="#fff"/><rect x="37" y="6" width="1" height="1" fill="#9a9a9a"/><rect x="39" y="2" width="1" height="1" fill="#fff"/><rect x="40" y="3" width="1" height="1" fill="#9a9a9a"/><rect x="39" y="5" width="1" height="1" fill="#fff"/><rect x="40" y="6" width="1" height="1" fill="#9a9a9a"/><rect x="47" y="2" width="1" height="1" fill="#fff"/><rect x="48" y="3" width="1" height="1" fill="#9a9a9a"/><rect x="47" y="5" width="1" height="1" fill="#fff"/><rect x="48" y="6" width="1" height="1" fill="#9a9a9a"/><rect x="50" y="2" width="1" height="1" fill="#fff"/><rect x="51" y="3" width="1" height="1" fill="#9a9a9a"/><rect x="50" y="5" width="1" height="1" fill="#fff"/><rect x="51" y="6" width="1" height="1" fill="#9a9a9a"/><rect x="53" y="2" width="1" height="1" fill="#fff"/><rect x="54" y="3" width="1" height="1" fill="#9a9a9a"/><rect x="53" y="5" width="1" height="1" fill="#fff"/><rect x="54" y="6" width="1" height="1" fill="#9a9a9a"/><rect x="75" y="2" width="1" height="1" fill="#fff"/><rect x="76" y="3" width="1" height="1" fill="#9a9a9a"/><rect x="75" y="5" width="1" height="1" fill="#fff"/><rect x="76" y="6" width="1" height="1" fill="#9a9a9a"/><rect x="78" y="2" width="1" height="1" fill="#fff"/><rect x="79" y="3" width="1" height="1" fill="#9a9a9a"/><rect x="78" y="5" width="1" height="1" fill="#fff"/><rect x="79" y="6" width="1" height="1" fill="#9a9a9a"/><rect x="81" y="2" width="1" height="1" fill="#fff"/><rect x="82" y="3" width="1" height="1" fill="#9a9a9a"/><rect x="81" y="5" width="1" height="1" fill="#fff"/><rect x="82" y="6" width="1" height="1" fill="#9a9a9a"/><path d="M17 2.500H29L23 8Z" fill="#b8b8b8" stroke="#707070" stroke-width="0.700"/><ellipse cx="66" cy="4.500" rx="4" ry="3" fill="#d8d8d8" stroke="#404040" stroke-width="0.800"/><path d="M63 6L59.500 9.500" stroke="#000" stroke-width="1.200"/><path d="M62 3.500L66.500 7.500" stroke="#404040" stroke-width="1"/></svg>
<style>.sw{width:13px;height:13px;box-shadow:1px 1px 0 #fcfcfc,-1px -1px 0 #ececec,inset 1px 1px 0 rgba(0,0,0,.2)}</style><div class="sw" style="left:10px;top:937px;background:#fff"><svg style="left:0;top:0" width="13" height="13"><path d="M0 0L13 13M13 0L0 13" stroke="#000" stroke-width="1"/></svg></div><div class="sw" style="left:26px;top:937px;background:#000000"></div><div class="sw" style="left:42px;top:937px;background:#000080"></div><div class="sw" style="left:58px;top:937px;background:#008000"></div><div class="sw" style="left:74px;top:937px;background:#008080"></div><div class="sw" style="left:90px;top:937px;background:#800000"></div><div class="sw" style="left:106px;top:937px;background:#800080"></div><div class="sw" style="left:122px;top:937px;background:#808000"></div><div class="sw" style="left:138px;top:937px;background:#808080"></div><div class="sw" style="left:154px;top:937px;background:#c0c0c0"></div><div class="sw" style="left:170px;top:937px;background:#0000ff"></div><div class="sw" style="left:186px;top:937px;background:#00ff00"></div><div class="sw" style="left:202px;top:937px;background:#00ffff"></div><div class="sw" style="left:218px;top:937px;background:#ff0000"></div><div class="sw" style="left:234px;top:937px;background:#ff00ff"></div><div class="sw" style="left:250px;top:937px;background:#ffff00"></div><div class="sw" style="left:266px;top:937px;background:#ffffff"></div><div class="sw" style="left:282px;top:937px;background:#333333"></div><div class="sw" style="left:298px;top:937px;background:#4c4c4c"></div><div class="sw" style="left:314px;top:937px;background:#666666"></div><div class="sw" style="left:330px;top:937px;background:#999999"></div><div class="sw" style="left:346px;top:937px;background:#b3b3b3"></div><div class="sw" style="left:362px;top:937px;background:#cccccc"></div><div class="sw" style="left:378px;top:937px;background:#e6e6e6"></div><div class="sw" style="left:394px;top:937px;background:#e6e6ff"></div><div class="sw" style="left:410px;top:937px;background:#ff3366"></div><div class="sw" style="left:426px;top:937px;background:#dc2300"></div><div class="sw" style="left:442px;top:937px;background:#b84700"></div><div class="sw" style="left:458px;top:937px;background:#ff3333"></div><div class="sw" style="left:474px;top:937px;background:#eb613d"></div><div class="sw" style="left:490px;top:937px;background:#b84747"></div><div class="sw" style="left:506px;top:937px;background:#b80047"></div><div class="sw" style="left:522px;top:937px;background:#99284c"></div><div class="sw" style="left:538px;top:937px;background:#94006b"></div><div class="sw" style="left:554px;top:937px;background:#94476b"></div><div class="sw" style="left:570px;top:937px;background:#944794"></div><div class="sw" style="left:586px;top:937px;background:#9966cc"></div><div class="sw" style="left:602px;top:937px;background:#6b4794"></div><div class="sw" style="left:618px;top:937px;background:#6b2394"></div><div class="sw" style="left:634px;top:937px;background:#6b0094"></div><div class="sw" style="left:650px;top:937px;background:#5e11a6"></div><div class="sw" style="left:666px;top:937px;background:#280099"></div><div class="sw" style="left:682px;top:937px;background:#4700b8"></div><div class="sw" style="left:698px;top:937px;background:#2300dc"></div><div class="sw" style="left:714px;top:937px;background:#2323dc"></div><div class="sw" style="left:730px;top:937px;background:#0047ff"></div><div class="sw" style="left:746px;top:937px;background:#0099ff"></div><div class="sw" style="left:762px;top:937px;background:#00b8ff"></div><div class="sw" style="left:778px;top:937px;background:#99ccff"></div><div class="sw" style="left:794px;top:937px;background:#00dcff"></div><div class="sw" style="left:810px;top:937px;background:#00cccc"></div><div class="sw" style="left:826px;top:937px;background:#23b8dc"></div><div class="sw" style="left:842px;top:937px;background:#47b8b8"></div><div class="sw" style="left:858px;top:937px;background:#33a3a3"></div><div class="sw" style="left:874px;top:937px;background:#198a8a"></div><div class="sw" style="left:890px;top:937px;background:#006b6b"></div><div class="sw" style="left:906px;top:937px;background:#004a4a"></div><div class="sw" style="left:922px;top:937px;background:#355e00"></div><div class="sw" style="left:938px;top:937px;background:#5c8526"></div><div class="sw" style="left:954px;top:937px;background:#7da647"></div><div class="sw" style="left:970px;top:937px;background:#94bd5e"></div><div class="sw" style="left:986px;top:937px;background:#00ae00"></div><div class="sw" style="left:1002px;top:937px;background:#33cc66"></div><div class="sw" style="left:1018px;top:937px;background:#3deb3d"></div><div class="sw" style="left:1034px;top:937px;background:#23ff23"></div><div class="sw" style="left:1050px;top:937px;background:#e6ff00"></div><div class="sw" style="left:1066px;top:937px;background:#ffff99"></div><div class="sw" style="left:1082px;top:937px;background:#ffff66"></div><div class="sw" style="left:1098px;top:937px;background:#e6e64c"></div><div class="sw" style="left:1114px;top:937px;background:#cccc00"></div><div class="sw" style="left:1130px;top:937px;background:#b3b300"></div><div class="sw" style="left:1146px;top:937px;background:#808019"></div><div class="sw" style="left:1162px;top:937px;background:#666600"></div><div class="sw" style="left:1178px;top:937px;background:#4c1900"></div><div class="sw" style="left:1194px;top:937px;background:#663300"></div><div class="sw" style="left:1210px;top:937px;background:#804c19"></div><div class="sw" style="left:1226px;top:937px;background:#996633"></div><div class="sw" style="left:1242px;top:937px;background:#cc6633"></div><div class="sw" style="left:10px;top:953px;background:#ff6633"></div><div class="sw" style="left:26px;top:953px;background:#ff9966"></div><div class="sw" style="left:42px;top:953px;background:#ffcc99"></div><div class="sw" style="left:58px;top:953px;background:#9999ff"></div><div class="sw" style="left:74px;top:953px;background:#993366"></div><div class="sw" style="left:90px;top:953px;background:#ffffcc"></div><div class="sw" style="left:106px;top:953px;background:#ccffff"></div><div class="sw" style="left:122px;top:953px;background:#660066"></div><div class="sw" style="left:138px;top:953px;background:#ff8080"></div><div class="sw" style="left:154px;top:953px;background:#0066cc"></div><div class="sw" style="left:170px;top:953px;background:#333366"></div><div class="sw" style="left:186px;top:953px;background:#666699"></div><div class="sw" style="left:202px;top:953px;background:#9999cc"></div><div class="sw" style="left:218px;top:953px;background:#ccccff"></div><div class="sw" style="left:234px;top:953px;background:#e6ccff"></div>
<div style="left:3px;top:988px;width:1271px;height:1px;background:#9a9a9a"></div>
<div style="left:3px;top:989px;width:1271px;height:1px;background:#fbfbfb"></div>
<div style="left:8px;top:992px;width:380px;height:22px;box-sizing:border-box;border:1px solid;border-color:#9a9a9a #fbfbfb #fbfbfb #9a9a9a"></div>
<div style="left:393px;top:992px;width:332px;height:22px;box-sizing:border-box;border:1px solid;border-color:#9a9a9a #fbfbfb #fbfbfb #9a9a9a"></div>
<div style="left:730px;top:992px;width:58px;height:22px;box-sizing:border-box;border:1px solid;border-color:#9a9a9a #fbfbfb #fbfbfb #9a9a9a"></div>
<div style="left:792px;top:992px;width:20px;height:22px;box-sizing:border-box;border:1px solid;border-color:#9a9a9a #fbfbfb #fbfbfb #9a9a9a"></div>
<div style="left:816px;top:992px;width:219px;height:22px;box-sizing:border-box;border:1px solid;border-color:#9a9a9a #fbfbfb #fbfbfb #9a9a9a"></div>
<div style="left:1039px;top:992px;width:232px;height:22px;box-sizing:border-box;border:1px solid;border-color:#9a9a9a #fbfbfb #fbfbfb #9a9a9a"></div>
<span class="t" style="left:9.0px;top:995.46px;font-size:16px;letter-spacing:0.117px;">Polygon </span><span class="t" style="left:72.2px;top:995.46px;font-size:16px;letter-spacing:1.755px;">mit </span><span class="t" style="left:105.0px;top:995.46px;font-size:16px;letter-spacing:0.017px;">12 </span><span class="t" style="left:127.3px;top:995.46px;font-size:16px;letter-spacing:0.230px;">Punkten </span><span class="t" style="left:192.3px;top:995.46px;font-size:16px;letter-spacing:0.940px;">markiert</span>
<span class="t" style="left:420.3px;top:995.46px;font-size:16px;letter-spacing:0.781px;">2,26 </span><span class="t" style="left:459.8px;top:995.46px;font-size:16px;letter-spacing:1.805px;">/ </span><span class="t" style="left:472.3px;top:995.46px;font-size:16px;letter-spacing:0.115px;">2,97</span>
<span class="t" style="left:585.5999999999999px;top:995.46px;font-size:16px;letter-spacing:0.286px;">14,27 </span><span class="t" style="left:631.8px;top:995.46px;font-size:16px;letter-spacing:0.023px;">x </span><span class="t" style="left:644.3px;top:995.46px;font-size:16px;letter-spacing:0.315px;">8,94</span>
<span class="t" style="left:740px;top:995.46px;font-size:16px;letter-spacing:-0.730px;">100%</span>
<span class="t" style="left:798px;top:995.46px;font-size:16px;">*</span>
<span class="t" style="left:818.0px;top:995.46px;font-size:16px;letter-spacing:0.563px;">Seite </span><span class="t" style="left:862.3px;top:995.46px;font-size:16px;letter-spacing:1.328px;">1 </span><span class="t" style="left:878.3px;top:995.46px;font-size:16px;letter-spacing:1.955px;">/ </span><span class="t" style="left:891.0999999999999px;top:995.46px;font-size:16px;letter-spacing:-1.106px;">1</span>
<span class="t" style="left:1041px;top:995.46px;font-size:16px;letter-spacing:0.383px;">Standard</span>
<svg style="left:398px;top:992px" width="20" height="16"><path d="M2 6.500h6M5.500 2v8" stroke="#1830d0" stroke-width="1"/><path d="M5.500 6.500H15.500V12.500H5.500" fill="none" stroke="#000" stroke-width="1" stroke-dasharray="1 1"/></svg>
<svg style="left:563px;top:992px" width="20" height="16"><path d="M6.500 4.500H15.500V13.500H6.500Z" fill="none" stroke="#000" stroke-width="1" stroke-dasharray="1 1"/><path d="M6 2.500h3M13 2.500h3M3.500 7v2M3.500 11v2" stroke="#000" stroke-width="1.400"/></svg>
<div style="left:1264px;top:93px;width:1px;height:895px;background:#f4f4f4"></div>
<div style="left:1274px;top:93px;width:1px;height:895px;background:#9a9a9a"></div>
<div style="left:1275px;top:93px;width:1px;height:895px;background:#fbfbfb"></div>
<div style="left:1276px;top:30px;width:1px;height:986px;background:#b4b4b4"></div>
<div style="left:1277px;top:30px;width:2px;height:994px;background:#ece8ec"></div>
<div style="left:1279px;top:12px;width:1px;height:1012px;background:#9c9c9c"></div>
<div style="left:0px;top:1016px;width:1280px;height:7px;background:#ece9ec"></div>
<div style="left:0px;top:1023px;width:1280px;height:1px;background:#808080"></div>
<div style="left:0px;top:966px;width:3px;height:57px;background:#fff"></div>
<div style="left:3px;top:966px;width:1.6px;height:58px;background:#404040"></div>
<svg style="left:0;top:0" width="0" height="0"><defs><pattern id="tp" width="2" height="2" patternUnits="userSpaceOnUse"><rect width="2" height="2" fill="#2f8080"/><rect width="1" height="1" fill="#5aa0a0"/><rect x="1" y="1" width="1" height="1" fill="#5aa0a0"/></pattern></defs></svg>
<div style="left:7px;top:131px;width:24px;height:24px;box-sizing:border-box;background:#c0d8e4;border:1px solid #3c7ca8"></div>
<svg style="left:8px;top:134px" width="20" height="18" viewBox="0 0 20 18"><path d="M6.500 2.500V14.500L9.500 11.500L11.500 16.500L13.500 15.500L11.500 10.800H15.300Z" fill="#fff" stroke="#000" stroke-width="1"/></svg>
<div class="hsep" style="left:7px;top:157px;width:23px;height:1px;"></div>
<div class="hsep" style="left:7px;top:188px;width:23px;height:1px;"></div>
<div class="hsep" style="left:7px;top:357px;width:23px;height:1px;"></div>
<div class="hsep" style="left:7px;top:434px;width:23px;height:1px;"></div>
<div class="hsep" style="left:7px;top:464px;width:23px;height:1px;"></div>
<svg style="left:8px;top:164px" width="20" height="18" viewBox="0 0 20 18"><path d="M2.500 8.500V16.500H10.500V12" fill="#fff" stroke="#000" stroke-width="1.200"/><circle cx="9" cy="7" r="4.800" fill="#f0f0f0" stroke="#000" stroke-width="1.100"/><path d="M12.500 10.500L16 14.500" stroke="#202060" stroke-width="2.200"/><path d="M12.5 0V8.5L18.5 4.2Z" fill="#e0e0e0"/><path d="M13.5 1V7.4L17.5 4.2Z" fill="#10e010" stroke="#087808" stroke-width="0.400"/></svg>
<svg style="left:8px;top:194px" width="20" height="18" viewBox="0 0 20 18"><path d="M4 3.500H14M9 3.500V15M6.500 15.500h5" stroke="#000080" stroke-width="2.200" fill="none"/><path d="M13 0V8.5L19 4.2Z" fill="#e0e0e0"/><path d="M14 1V7.4L18 4.2Z" fill="#10e010" stroke="#087808" stroke-width="0.400"/></svg>
<svg style="left:8px;top:217px" width="20" height="18" viewBox="0 0 20 18"><rect x="2.500" y="5.500" width="14" height="9.500" fill="#3a8888" stroke="#000080" stroke-width="1.200"/><path d="M13 0V8.5L19 4.2Z" fill="#e0e0e0"/><path d="M14 1V7.4L18 4.2Z" fill="#10e010" stroke="#087808" stroke-width="0.400"/></svg>
<svg style="left:8px;top:240px" width="20" height="18" viewBox="0 0 20 18"><path d="M14 5C9 3.500 2.500 6 2.500 10.500C2.500 15 12 16.500 16.500 12V10H13.500Z" fill="#3a8888" stroke="#000080" stroke-width="1.200"/><path d="M13 0V8.5L19 4.2Z" fill="#e0e0e0"/><path d="M14 1V7.4L18 4.2Z" fill="#10e010" stroke="#087808" stroke-width="0.400"/></svg>
<svg style="left:8px;top:263px" width="20" height="18" viewBox="0 0 20 18"><path d="M3 16L16 16L18 12L14 12Z" fill="#888"/><path d="M3.500 8.500L7.500 4.500H14.500V10.500L10.500 14.500" fill="#fff" stroke="#000" stroke-width="1"/><rect x="3.500" y="8.500" width="7" height="6" fill="#a0d0d0" stroke="#000" stroke-width="1"/><path d="M10.500 8.500L14.500 4.500" stroke="#000"/><path d="M13 0V8.5L19 4.2Z" fill="#e0e0e0"/><path d="M14 1V7.4L18 4.2Z" fill="#10e010" stroke="#087808" stroke-width="0.400"/></svg>
<svg style="left:8px;top:286px" width="20" height="18" viewBox="0 0 20 18"><path d="M3.500 4.500H8.500V10.500H15.500V15.500H3.500Z" fill="#3a8888" stroke="#000080" stroke-width="1.200"/><path d="M13 0V8.5L19 4.2Z" fill="#e0e0e0"/><path d="M14 1V7.4L18 4.2Z" fill="#10e010" stroke="#087808" stroke-width="0.400"/></svg>
<svg style="left:8px;top:309px" width="20" height="18" viewBox="0 0 20 18"><path d="M2.500 11.500H13" stroke="#000080" stroke-width="1.300"/><path d="M12.500 8L17 11.500L12.500 15Z" fill="#000080"/><path d="M13 0V8.5L19 4.2Z" fill="#e0e0e0"/><path d="M14 1V7.4L18 4.2Z" fill="#10e010" stroke="#087808" stroke-width="0.400"/></svg>
<svg style="left:8px;top:332px" width="20" height="18" viewBox="0 0 20 18"><path d="M5.500 8.500H8.500V14.500H12" fill="none" stroke="#000080" stroke-width="1.200"/><rect x="2" y="7" width="3.500" height="3.500" fill="#fff" stroke="#000080" stroke-width="1.100"/><rect x="12.500" y="12.500" width="3.500" height="4" fill="#fff" stroke="#000080" stroke-width="1.100"/><path d="M13 0V8.5L19 4.2Z" fill="#e0e0e0"/><path d="M14 1V7.4L18 4.2Z" fill="#10e010" stroke="#087808" stroke-width="0.400"/></svg>
<svg style="left:8px;top:363px" width="20" height="18" viewBox="0 0 20 18"><path d="M12.500 6.500A5.200 5.200 0 1 0 14 12" fill="none" stroke="#000080" stroke-width="2"/><path d="M14.500 8.500L11 10.500L15 11.500Z" fill="#000080"/><path d="M13 0V8.5L19 4.2Z" fill="#e0e0e0"/><path d="M14 1V7.4L18 4.2Z" fill="#10e010" stroke="#087808" stroke-width="0.400"/></svg>
<svg style="left:8px;top:387px" width="20" height="18" viewBox="0 0 20 18"><path d="M3.500 2.500V16" stroke="#000080" stroke-width="1.300"/><rect x="5.500" y="3.500" width="6" height="3" fill="#60e0f0" stroke="#000" stroke-width="0.900"/><rect x="5.500" y="8" width="8" height="3" fill="#ffff60" stroke="#000" stroke-width="0.900"/><rect x="5.500" y="12.500" width="5" height="3" fill="#60e0f0" stroke="#000" stroke-width="0.900"/><path d="M13 0V8.5L19 4.2Z" fill="#e0e0e0"/><path d="M14 1V7.4L18 4.2Z" fill="#10e010" stroke="#087808" stroke-width="0.400"/></svg>
<svg style="left:8px;top:410px" width="20" height="18" viewBox="0 0 20 18"><rect x="2.500" y="11" width="6" height="5" fill="#808080" stroke="#202020"/><rect x="5.500" y="5.500" width="8.500" height="8" fill="#ffff70" stroke="#404040" stroke-width="0.900"/><rect x="11" y="3" width="3" height="3" fill="#c0c0c0" stroke="#404040" stroke-width="0.800"/><path d="M13 0V8.5L19 4.2Z" fill="#e0e0e0"/><path d="M14 1V7.4L18 4.2Z" fill="#10e010" stroke="#087808" stroke-width="0.400"/></svg>
<svg style="left:8px;top:442px" width="20" height="18" viewBox="0 0 20 18"><circle cx="8.500" cy="11" r="5.800" fill="#fff060" stroke="#000" stroke-width="1"/><path d="M8.500 11V5.200A5.800 5.800 0 0 1 14.300 11Z" fill="#40c0d0" stroke="#000" stroke-width="0.700"/><path d="M8.500 11H14.300A5.800 5.800 0 0 1 6 16.200Z" fill="#904090" stroke="#000" stroke-width="0.700"/><path d="M15 9L17.500 11" stroke="#000" stroke-width="1.200"/><path d="M13 0V8.5L19 4.2Z" fill="#e0e0e0"/><path d="M14 1V7.4L18 4.2Z" fill="#10e010" stroke="#087808" stroke-width="0.400"/></svg>
<svg style="left:8px;top:472px" width="20" height="18" viewBox="0 0 20 18"><path d="M5 17L15 17L17.500 12L14 12Z" fill="#909090"/><path d="M2.500 9L6.500 4.500H15.500V11L11.500 15.500H2.500Z" fill="#2030b0" stroke="#000080" stroke-width="1"/><rect x="3" y="9" width="8" height="6" fill="#8c8c8c"/></svg>
<div style="left:1264px;top:93px;width:10px;height:40px;box-sizing:border-box;background:#e6e6e6;border:1px solid;border-color:#fafafa #b0b0b0 #b0b0b0 #fafafa"></div>
<div style="left:1264px;top:134px;width:10px;height:41px;box-sizing:border-box;background:#e6e6e6;border:1px solid;border-color:#fafafa #b0b0b0 #b0b0b0 #fafafa"></div>
<svg style="left:1264px;top:93px" width="11" height="90"><rect x="2" y="3" width="1" height="1" fill="#fff"/><rect x="3" y="4" width="1" height="1" fill="#9a9a9a"/><rect x="5" y="3" width="1" height="1" fill="#fff"/><rect x="6" y="4" width="1" height="1" fill="#9a9a9a"/><rect x="2" y="6" width="1" height="1" fill="#fff"/><rect x="3" y="7" width="1" height="1" fill="#9a9a9a"/><rect x="5" y="6" width="1" height="1" fill="#fff"/><rect x="6" y="7" width="1" height="1" fill="#9a9a9a"/><rect x="2" y="9" width="1" height="1" fill="#fff"/><rect x="3" y="10" width="1" height="1" fill="#9a9a9a"/><rect x="5" y="9" width="1" height="1" fill="#fff"/><rect x="6" y="10" width="1" height="1" fill="#9a9a9a"/><rect x="2" y="31" width="1" height="1" fill="#fff"/><rect x="3" y="32" width="1" height="1" fill="#9a9a9a"/><rect x="5" y="31" width="1" height="1" fill="#fff"/><rect x="6" y="32" width="1" height="1" fill="#9a9a9a"/><rect x="2" y="34" width="1" height="1" fill="#fff"/><rect x="3" y="35" width="1" height="1" fill="#9a9a9a"/><rect x="5" y="34" width="1" height="1" fill="#fff"/><rect x="6" y="35" width="1" height="1" fill="#9a9a9a"/><rect x="2" y="37" width="1" height="1" fill="#fff"/><rect x="3" y="38" width="1" height="1" fill="#9a9a9a"/><rect x="5" y="37" width="1" height="1" fill="#fff"/><rect x="6" y="38" width="1" height="1" fill="#9a9a9a"/><rect x="2" y="44" width="1" height="1" fill="#fff"/><rect x="3" y="45" width="1" height="1" fill="#9a9a9a"/><rect x="5" y="44" width="1" height="1" fill="#fff"/><rect x="6" y="45" width="1" height="1" fill="#9a9a9a"/><rect x="2" y="47" width="1" height="1" fill="#fff"/><rect x="3" y="48" width="1" height="1" fill="#9a9a9a"/><rect x="5" y="47" width="1" height="1" fill="#fff"/><rect x="6" y="48" width="1" height="1" fill="#9a9a9a"/><rect x="2" y="50" width="1" height="1" fill="#fff"/><rect x="3" y="51" width="1" height="1" fill="#9a9a9a"/><rect x="5" y="50" width="1" height="1" fill="#fff"/><rect x="6" y="51" width="1" height="1" fill="#9a9a9a"/><rect x="2" y="73" width="1" height="1" fill="#fff"/><rect x="3" y="74" width="1" height="1" fill="#9a9a9a"/><rect x="5" y="73" width="1" height="1" fill="#fff"/><rect x="6" y="74" width="1" height="1" fill="#9a9a9a"/><rect x="2" y="76" width="1" height="1" fill="#fff"/><rect x="3" y="77" width="1" height="1" fill="#9a9a9a"/><rect x="5" y="76" width="1" height="1" fill="#fff"/><rect x="6" y="77" width="1" height="1" fill="#9a9a9a"/><rect x="2" y="79" width="1" height="1" fill="#fff"/><rect x="3" y="80" width="1" height="1" fill="#9a9a9a"/><rect x="5" y="79" width="1" height="1" fill="#fff"/><rect x="6" y="80" width="1" height="1" fill="#9a9a9a"/><path d="M8 15V25.500L2 20.250Z" fill="#c0c0c0" stroke="#909090" stroke-width="0.700"/><path d="M8.300 15V25.500" stroke="#202020" stroke-width="1"/><ellipse cx="6" cy="57.500" rx="3.200" ry="2.800" fill="#d4d4d4" stroke="#505050" stroke-width="0.800"/><path d="M3.300 59L7.500 61.500" stroke="#303030" stroke-width="1"/><path d="M4 60.500L1 63.500" stroke="#000" stroke-width="1.200"/></svg>
<svg style="left:111px;top:410px" width="100" height="84" viewBox="0 0 100 84"><defs><linearGradient id="fb" x1="0" y1="0" x2="0" y2="1"><stop offset="0" stop-color="#4f8cae"/><stop offset="0.12" stop-color="#3a7ba0"/><stop offset="0.34" stop-color="#1e5b82"/><stop offset="1" stop-color="#2a6a90"/></linearGradient><linearGradient id="fb2" x1="0" y1="0" x2="0" y2="1"><stop offset="0" stop-color="#4a88ac"/><stop offset="1" stop-color="#1b587e"/></linearGradient><radialGradient id="fg1" cx="0.45" cy="0.35" r="0.7"><stop offset="0" stop-color="#fff"/><stop offset="0.7" stop-color="#eef2f8"/><stop offset="1" stop-color="#7a9cc4"/></radialGradient></defs><path d="M0 83V8Q0 0 8 0H89Q97 0 97 8V83Z" fill="url(#fb)"/><path d="M89 0.500Q98.500 0.500 98.500 10V83" fill="none" stroke="#2a6a90" stroke-width="1.500"/><path d="M90 0.500Q97.500 1 97.800 9" fill="none" stroke="#e8f0f4" stroke-width="1"/><rect x="0" y="75" width="99" height="8.500" fill="url(#fb2)"/><rect x="0" y="82.500" width="99" height="1" fill="#164c70"/><rect x="3" y="29" width="92.500" height="46.500" fill="#e0e0e0"/><rect x="30" y="-1" width="36" height="28.500" rx="12" fill="none" stroke="#fff" stroke-width="2"/><circle cx="16.500" cy="13" r="6.800" fill="url(#fg1)"/><path d="M12.500 11.500H20.500L16.500 16Z" fill="#000"/><rect x="41.500" y="4.500" width="11" height="14" fill="#f4f4f4" stroke="#b0b0b0" stroke-width="0.800"/><rect x="43" y="8" width="7" height="8" fill="#b8f0f4"/><path d="M51 7L44.500 16" stroke="#3030c8" stroke-width="1.800"/><path d="M44.500 16L43.500 17.500" stroke="#e0d020" stroke-width="1.800"/><rect x="74.500" y="5.500" width="14" height="14" fill="#f2f4f8"/><path d="M74.500 20H89V5.500" fill="none" stroke="#18507a" stroke-width="1"/><path d="M78 9L85 16.500M85 9L78 16.500" stroke="#000" stroke-width="2.400"/></svg>
<div style="left:160px;top:439px;width:23px;height:23px;box-sizing:border-box;background:#9cbccc;border:1px solid #5c94b4"></div>
<svg style="left:114.5px;top:442px" width="20" height="18" viewBox="0 0 20 18"><path d="M2 13L11 2.500" stroke="#000080" stroke-width="1" stroke-dasharray="2 1.500"/><path d="M6 9C7 6 11 5 13.500 6.500C16 8 15.500 12 13 13.500H8.500C6.500 12.500 5.500 11 6 9Z" fill="#3a8888" stroke="#000080" stroke-width="1.200"/><rect x="1" y="12" width="2" height="2" fill="#000080"/><rect x="10.500" y="1.500" width="2" height="2" fill="#000080"/></svg>
<svg style="left:138px;top:442px" width="20" height="18" viewBox="0 0 20 18"><path d="M6.500 3.500L9.500 4.500L12 3L13.500 5L11 6.500C10 9 13 11 13.500 14.500H5C6.500 12 7.500 10 6 8.500C5 7 5.500 5 6.500 3.500Z" fill="#3a8888" stroke="#000080" stroke-width="1.200"/><path d="M4 14.500h11" stroke="#000080" stroke-width="1.200"/></svg>
<svg style="left:160px;top:442px" width="20" height="18" viewBox="0 0 20 18"><path d="M6.500 6.500H11.500V12.500H17.500V16H6.500Z" fill="#808890"/><path d="M4.500 3.500H9.500V9.500H15.500V13.500H4.500Z" fill="#3a8888" stroke="#000080" stroke-width="1.300"/></svg>
<svg style="left:184px;top:442px" width="20" height="18" viewBox="0 0 20 18"><path d="M2.500 15.500C3 12 6 9 8.500 11C10 13.500 14 14 16.500 11.500V15.500Z" fill="#3a8888" stroke="#000080" stroke-width="1" stroke-dasharray="1.500 0.800"/><path d="M10 9L16.500 2.500L18 4L11.500 10.500Z" fill="#fff" stroke="#000080" stroke-width="1"/></svg>
<svg style="left:114.5px;top:464px" width="20" height="18" viewBox="0 0 20 18"><path d="M2.500 15.500C9 15 8 4 16 3.500" fill="none" stroke="#000080" stroke-width="1.200"/><path d="M3 4L15.500 15.500" stroke="#000080" stroke-width="1" stroke-dasharray="2 1.500"/><rect x="2" y="3" width="2" height="2" fill="#000080"/><rect x="14.500" y="14.500" width="2" height="2" fill="#000080"/></svg>
<svg style="left:138px;top:464px" width="20" height="18" viewBox="0 0 20 18"><path d="M5 15.500C6 13 5.500 11 4.500 9C4 6.500 6.500 5 8 6C9.500 4 13 4.500 13 7C12.500 9 11.500 10 12.500 12L14.500 15.500H10.500" fill="none" stroke="#000080" stroke-width="1.200"/><path d="M3.500 15.500h3" stroke="#000080" stroke-width="1.200"/></svg>
<svg style="left:160px;top:464px" width="20" height="18" viewBox="0 0 20 18"><path d="M4.500 3.500H9.500V9.500H15.500V14.500H4.500Z" fill="none" stroke="#000080" stroke-width="1.300"/></svg>
<div style="left:184px;top:462px;width:22px;height:12px;overflow:hidden"><svg style="left:0;top:0" width="22" height="20"><path d="M10 12L16.500 5.500L18 7L11.500 13.500Z" fill="#fff" stroke="#000080" stroke-width="1"/><path d="M2 12.500h5" stroke="#000080"/></svg></div>
<div style="left:187px;top:474px;width:443px;height:190px;box-sizing:border-box;background:#ffffe6;border:1px solid #000"></div>
<span class="t" style="left:192.8px;top:479.96px;font-size:16px;letter-spacing:0.810px;">Zeichnet </span>
<span class="t" style="left:265.90000000000003px;top:479.96px;font-size:16px;letter-spacing:0.819px;">eine </span>
<span class="t" style="left:304.7px;top:479.96px;font-size:16px;letter-spacing:0.254px;">geschlossene </span>
<span class="t" style="left:410.3px;top:479.96px;font-size:16px;letter-spacing:0.564px;">Form </span>
<span class="t" style="left:454.90000000000003px;top:479.96px;font-size:16px;letter-spacing:-0.113px;">aus </span>
<span class="t" style="left:484.7px;top:479.96px;font-size:16px;letter-spacing:0.541px;">geraden </span>
<span class="t" style="left:552.1999999999999px;top:479.96px;font-size:16px;letter-spacing:0.506px;">Linien,</span>
<span class="t" style="left:192.8px;top:499.96px;font-size:16px;letter-spacing:1.201px;">die </span>
<span class="t" style="left:223.4px;top:499.96px;font-size:16px;letter-spacing:0.678px;">auf </span>
<span class="t" style="left:252.8px;top:499.96px;font-size:16px;letter-spacing:0.464px;">Winkel </span>
<span class="t" style="left:308.5px;top:499.96px;font-size:16px;letter-spacing:0.413px;">von </span>
<span class="t" style="left:340.40000000000003px;top:499.96px;font-size:16px;letter-spacing:-0.050px;">45 </span>
<span class="t" style="left:362.5px;top:499.96px;font-size:16px;letter-spacing:0.477px;">Grad </span>
<span class="t" style="left:404.90000000000003px;top:499.96px;font-size:16px;letter-spacing:0.471px;">beschränkt </span>
<span class="t" style="left:492.8px;top:499.96px;font-size:16px;letter-spacing:0.658px;">sind. </span>
<span class="t" style="left:535.0px;top:499.96px;font-size:16px;letter-spacing:0.496px;">Klicken </span>
<span class="t" style="left:595.0px;top:499.96px;font-size:16px;letter-spacing:-0.408px;">Sie</span>
<span class="t" style="left:192.8px;top:519.96px;font-size:16px;letter-spacing:0.978px;">auf </span>
<span class="t" style="left:223.4px;top:519.96px;font-size:16px;letter-spacing:0.640px;">den </span>
<span class="t" style="left:257.1px;top:519.96px;font-size:16px;letter-spacing:0.584px;">Startpunkt </span>
<span class="t" style="left:340.90000000000003px;top:519.96px;font-size:16px;letter-spacing:0.412px;">des </span>
<span class="t" style="left:372.8px;top:519.96px;font-size:16px;letter-spacing:0.070px;">Polygons </span>
<span class="t" style="left:443.7px;top:519.96px;font-size:16px;letter-spacing:0.415px;">und </span>
<span class="t" style="left:476.5px;top:519.96px;font-size:16px;letter-spacing:0.587px;">ziehen </span>
<span class="t" style="left:532.1999999999999px;top:519.96px;font-size:16px;letter-spacing:0.157px;">Sie, </span>
<span class="t" style="left:565.0px;top:519.96px;font-size:16px;letter-spacing:0.333px;">um</span>
<span class="t" style="left:192.8px;top:539.96px;font-size:16px;letter-spacing:0.768px;">einen </span>
<span class="t" style="left:241.0px;top:539.96px;font-size:16px;letter-spacing:0.607px;">Linienabschnitt </span>
<span class="t" style="left:361.90000000000003px;top:539.96px;font-size:16px;letter-spacing:0.152px;">zu </span>
<span class="t" style="left:383.7px;top:539.96px;font-size:16px;letter-spacing:0.616px;">zeichnen. </span>
<span class="t" style="left:462.8px;top:539.96px;font-size:16px;letter-spacing:0.496px;">Klicken </span>
<span class="t" style="left:522.8px;top:539.96px;font-size:16px;letter-spacing:0.130px;">Sie </span>
<span class="t" style="left:550.9px;top:539.96px;font-size:16px;letter-spacing:0.827px;">erneut,</span>
<span class="t" style="left:192.8px;top:559.96px;font-size:16px;letter-spacing:0.476px;">um </span>
<span class="t" style="left:220.9px;top:559.96px;font-size:16px;letter-spacing:0.188px;">das </span>
<span class="t" style="left:251.9px;top:559.96px;font-size:16px;letter-spacing:0.338px;">Ende </span>
<span class="t" style="left:295.40000000000003px;top:559.96px;font-size:16px;letter-spacing:0.312px;">des </span>
<span class="t" style="left:326.90000000000003px;top:559.96px;font-size:16px;letter-spacing:0.595px;">Linienabschnitts </span>
<span class="t" style="left:456.2px;top:559.96px;font-size:16px;letter-spacing:0.667px;">festzulegen, </span>
<span class="t" style="left:555.5999999999999px;top:559.96px;font-size:16px;letter-spacing:0.366px;">und</span>
<span class="t" style="left:192.8px;top:579.96px;font-size:16px;letter-spacing:0.718px;">klicken </span>
<span class="t" style="left:251.9px;top:579.96px;font-size:16px;letter-spacing:0.030px;">Sie </span>
<span class="t" style="left:279.6px;top:579.96px;font-size:16px;letter-spacing:1.225px;">weiter </span>
<span class="t" style="left:335.3px;top:579.96px;font-size:16px;letter-spacing:1.019px;">für </span>
<span class="t" style="left:362.5px;top:579.96px;font-size:16px;letter-spacing:0.951px;">die </span>
<span class="t" style="left:392.1px;top:579.96px;font-size:16px;letter-spacing:0.789px;">restlichen </span>
<span class="t" style="left:473.7px;top:579.96px;font-size:16px;letter-spacing:0.660px;">Linienabschnitte</span>
<span class="t" style="left:192.8px;top:599.96px;font-size:16px;letter-spacing:0.413px;">des </span>
<span class="t" style="left:224.70000000000002px;top:599.96px;font-size:16px;letter-spacing:0.248px;">Polygons. </span>
<span class="t" style="left:301.90000000000003px;top:599.96px;font-size:16px;letter-spacing:0.546px;">Doppelklicken </span>
<span class="t" style="left:413.6px;top:599.96px;font-size:16px;letter-spacing:0.105px;">Sie </span>
<span class="t" style="left:441.6px;top:599.96px;font-size:16px;letter-spacing:0.232px;">zum </span>
<span class="t" style="left:477.2px;top:599.96px;font-size:16px;letter-spacing:0.127px;">Schluß. </span>
<span class="t" style="left:536.9px;top:599.96px;font-size:16px;letter-spacing:0.224px;">Um </span>
<span class="t" style="left:566.9px;top:599.96px;font-size:16px;letter-spacing:-0.099px;">das</span>
<span class="t" style="left:192.8px;top:619.96px;font-size:16px;letter-spacing:0.254px;">Polygon </span>
<span class="t" style="left:257.1px;top:619.96px;font-size:16px;letter-spacing:1.155px;">mit </span>
<span class="t" style="left:287.5px;top:619.96px;font-size:16px;letter-spacing:0.772px;">beliebigen </span>
<span class="t" style="left:373.40000000000003px;top:619.96px;font-size:16px;letter-spacing:0.268px;">Winkeln </span>
<span class="t" style="left:436.90000000000003px;top:619.96px;font-size:16px;letter-spacing:0.085px;">zu </span>
<span class="t" style="left:458.5px;top:619.96px;font-size:16px;letter-spacing:0.636px;">zeichnen, </span>
<span class="t" style="left:537.8px;top:619.96px;font-size:16px;letter-spacing:0.908px;">halten </span>
<span class="t" style="left:592.1999999999999px;top:619.96px;font-size:16px;letter-spacing:-0.475px;">Sie</span>
<span class="t" style="left:192.8px;top:639.96px;font-size:16px;letter-spacing:0.725px;">beim </span>
<span class="t" style="left:235.55px;top:639.96px;font-size:16px;letter-spacing:0.590px;">Klicken </span>
<span class="t" style="left:296.3px;top:639.96px;font-size:16px;letter-spacing:0.863px;">die </span>
<span class="t" style="left:325.55px;top:639.96px;font-size:16px;letter-spacing:0.731px;">Umschalttaste </span>
<span class="t" style="left:441.6px;top:639.96px;font-size:16px;letter-spacing:0.632px;">gedrückt.</span>
</div></body></html>
